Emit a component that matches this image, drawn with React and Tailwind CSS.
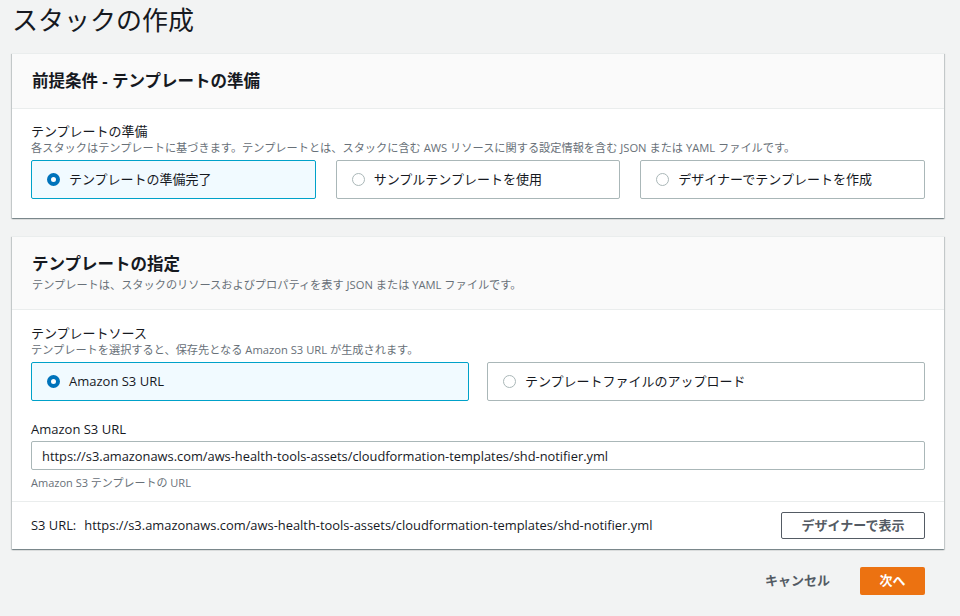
import React, { useState } from "react";

const font = "font-['Open_Sans','Noto_Sans_CJK_JP',sans-serif]";

const Radio = ({ checked }) => (
  <span
    className={
      checked
        ? "w-[13px] h-[13px] rounded-full border-[4px] border-[#0073bb] bg-white shrink-0"
        : "w-[13px] h-[13px] rounded-full border-[1.5px] border-[#aab7b8] bg-white shrink-0"
    }
  />
);

const Tile = ({ label, checked, onClick }) => (
  <button
    onClick={onClick}
    className={
      "flex items-center gap-[9px] h-[39px] pl-[15px] rounded-[2px] border text-left text-[13px] text-[#16191f] " +
      (checked ? "bg-[#f1faff] border-[#00a1c9]" : "bg-white border-[#aab7b8]")
    }
  >
    <Radio checked={checked} />
    <span>{label}</span>
  </button>
);

const url =
  "https://s3.amazonaws.com/aws-health-tools-assets/cloudformation-templates/shd-notifier.yml";

const App = () => {
  const [prep, setPrep] = useState(0);
  const [source, setSource] = useState(0);

  return (
    <div className={"min-h-screen bg-[#f2f3f3] text-[#16191f] pl-3 pr-4 " + font}>
      <h1 className="text-[26px] leading-[36px] pt-[2px] h-[53px]">スタックの作成</h1>

      {/* prerequisite */}
      <section className="bg-white border-t border-[#eaeded] shadow-[0_1px_1px_0_rgba(0,28,36,0.3),1px_1px_1px_0_rgba(0,28,36,0.15),-1px_1px_1px_0_rgba(0,28,36,0.15)]">
        <div className="bg-[#fafafa] border-b border-[#eaeded] px-5 py-[17px]">
          <h2 className="text-[16.5px] leading-5 font-bold">前提条件 - テンプレートの準備</h2>
        </div>
        <div className="px-[19px] pt-[13px] pb-[19px]">
          <div className="text-[13px] leading-[18px]">テンプレートの準備</div>
          <div className="text-[11.2px] leading-[15px] text-[#687078]">
            各スタックはテンプレートに基づきます。テンプレートとは、スタックに含む AWS リソースに関する設定情報を含む JSON または YAML ファイルです。
          </div>
          <div className="grid grid-cols-3 gap-5 mt-[5px]">
            <Tile label="テンプレートの準備完了" checked={prep === 0} onClick={() => setPrep(0)} />
            <Tile label="サンプルテンプレートを使用" checked={prep === 1} onClick={() => setPrep(1)} />
            <Tile label="デザイナーでテンプレートを作成" checked={prep === 2} onClick={() => setPrep(2)} />
          </div>
        </div>
      </section>

      {/* template */}
      <section className="mt-[18px] bg-white border-t border-[#eaeded] shadow-[0_1px_1px_0_rgba(0,28,36,0.3),1px_1px_1px_0_rgba(0,28,36,0.15),-1px_1px_1px_0_rgba(0,28,36,0.15)]">
        <div className="bg-[#fafafa] border-b border-[#eaeded] px-5 pt-[15px] pb-[16px]">
          <h2 className="text-[16.5px] leading-6 font-bold">テンプレートの指定</h2>
          <p className="text-[11.2px] leading-4 text-[#687078] mt-[1px]">
            テンプレートは、スタックのリソースおよびプロパティを表す JSON または YAML ファイルです。
          </p>
        </div>
        <div className="px-[19px] pt-[14px] pb-[10px] border-b border-[#eaeded]">
          <div className="text-[13px] leading-[18px]">テンプレートソース</div>
          <div className="text-[11.2px] leading-[15px] text-[#687078]">
            テンプレートを選択すると、保存先となる Amazon S3 URL が生成されます。
          </div>
          <div className="grid grid-cols-2 gap-[18px] mt-[5px]">
            <Tile label="Amazon S3 URL" checked={source === 0} onClick={() => setSource(0)} />
            <Tile label="テンプレートファイルのアップロード" checked={source === 1} onClick={() => setSource(1)} />
          </div>
          <div className="text-[13px] leading-[18px] mt-[19px]">Amazon S3 URL</div>
          <input
            readOnly
            value={url}
            className="mt-[3px] w-full h-[29px] px-[10px] border border-[#aab7b8] rounded-[2px] font-['Open_Sans',sans-serif] text-[12.85px] text-[#16191f] outline-none"
          />
          <div className="text-[11px] leading-4 text-[#687078] mt-[5px]">Amazon S3 テンプレートの URL</div>
        </div>
        <div className="flex items-center justify-between px-[19px] py-[10px]">
          <div className="text-[12.9px]">
            <span>S3 URL:</span>
            <span className="ml-2">{url}</span>
          </div>
          <button className="w-[144px] h-[27px] border border-[#545b64] rounded-[2px] bg-white text-[13px] font-bold text-[#545b64]">
            デザイナーで表示
          </button>
        </div>
      </section>

      <div className="flex justify-end items-center gap-[30px] mt-[18px] pr-[19px]">
        <button className="text-[13px] font-bold text-[#545b64]">キャンセル</button>
        <button className="w-[65px] h-[28px] rounded-[2px] bg-[#ec7211] text-white text-[13px] font-bold">
          次へ
        </button>
      </div>
    </div>
  );
};

export default App;
